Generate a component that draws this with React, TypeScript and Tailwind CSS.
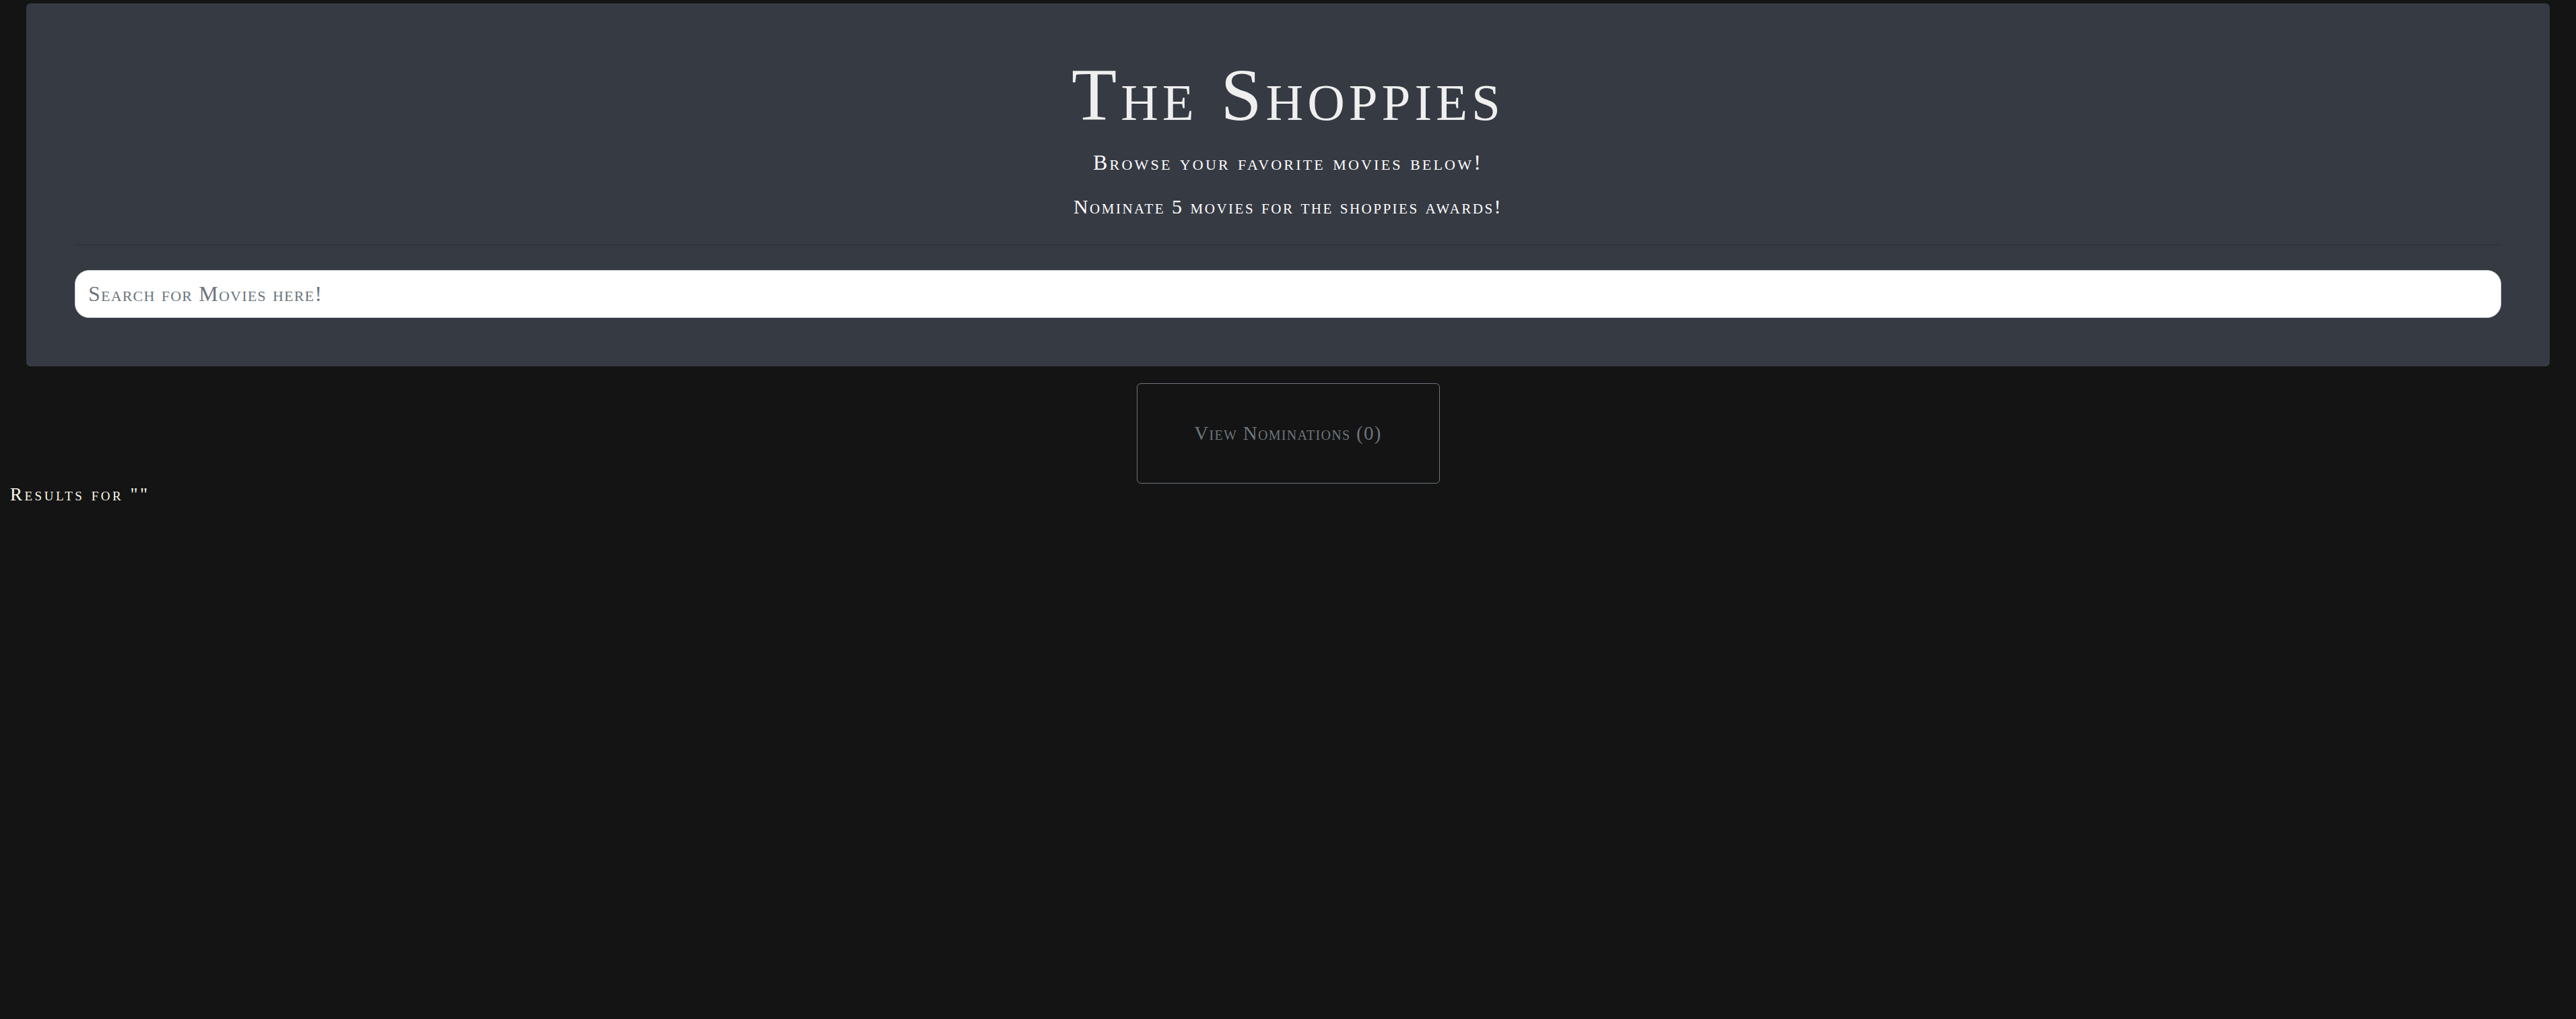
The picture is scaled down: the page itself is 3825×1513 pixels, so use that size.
import { useState } from "react";

const serif = "font-['Liberation_Serif',_'Times_New_Roman',_serif] [font-variant:small-caps]";

const App = () => {
  const [query, setQuery] = useState("");
  const nominations: string[] = [];

  return (
    <div className={`min-h-screen bg-[#141414] pt-[5px] ${serif}`}>
      {/* header card */}
      <section className="mx-[39px] rounded-[6px] bg-[#363a43] px-[72px] pt-[81px] pb-[72px] text-center">
        <h1 className="text-[110px] leading-none tracking-[6px] text-[#efefef]">
          The Shoppies
        </h1>
        <p className="mt-[29px] text-[32px] leading-none tracking-[3.2px] text-white">
          Browse your favorite movies below!
        </p>
        <p className="mt-[35px] text-[30px] leading-none tracking-[2.5px] text-white">
          Nominate 5 movies for the shoppies awards!
        </p>
        <hr className="mt-[41px] border-0 border-t border-[#2d3136]" />
        <input
          value={query}
          onChange={(e) => setQuery(e.target.value)}
          placeholder="Search for Movies here!"
          className={`mt-[37px] block h-[71px] w-full rounded-[21px] border border-[#ced4da] bg-white px-[19px] text-[32px] tracking-[1.2px] text-[#495057] outline-none placeholder:text-[#6c757d] ${serif}`}
        />
      </section>

      <div className="mt-[25px] flex justify-center">
        <button
          className={`h-[149px] w-[450px] rounded-[6px] border border-[#6c757d] bg-transparent text-[29px] tracking-[1.3px] text-[#6c757d] ${serif}`}
        >
          View Nominations ({nominations.length})
        </button>
      </div>

      <h3 className="mt-[3px] pl-[15px] text-[27px] leading-none tracking-[3.5px] text-[#fdf8ea]">
        Results for "{query}"
      </h3>
    </div>
  );
};

export default App;
